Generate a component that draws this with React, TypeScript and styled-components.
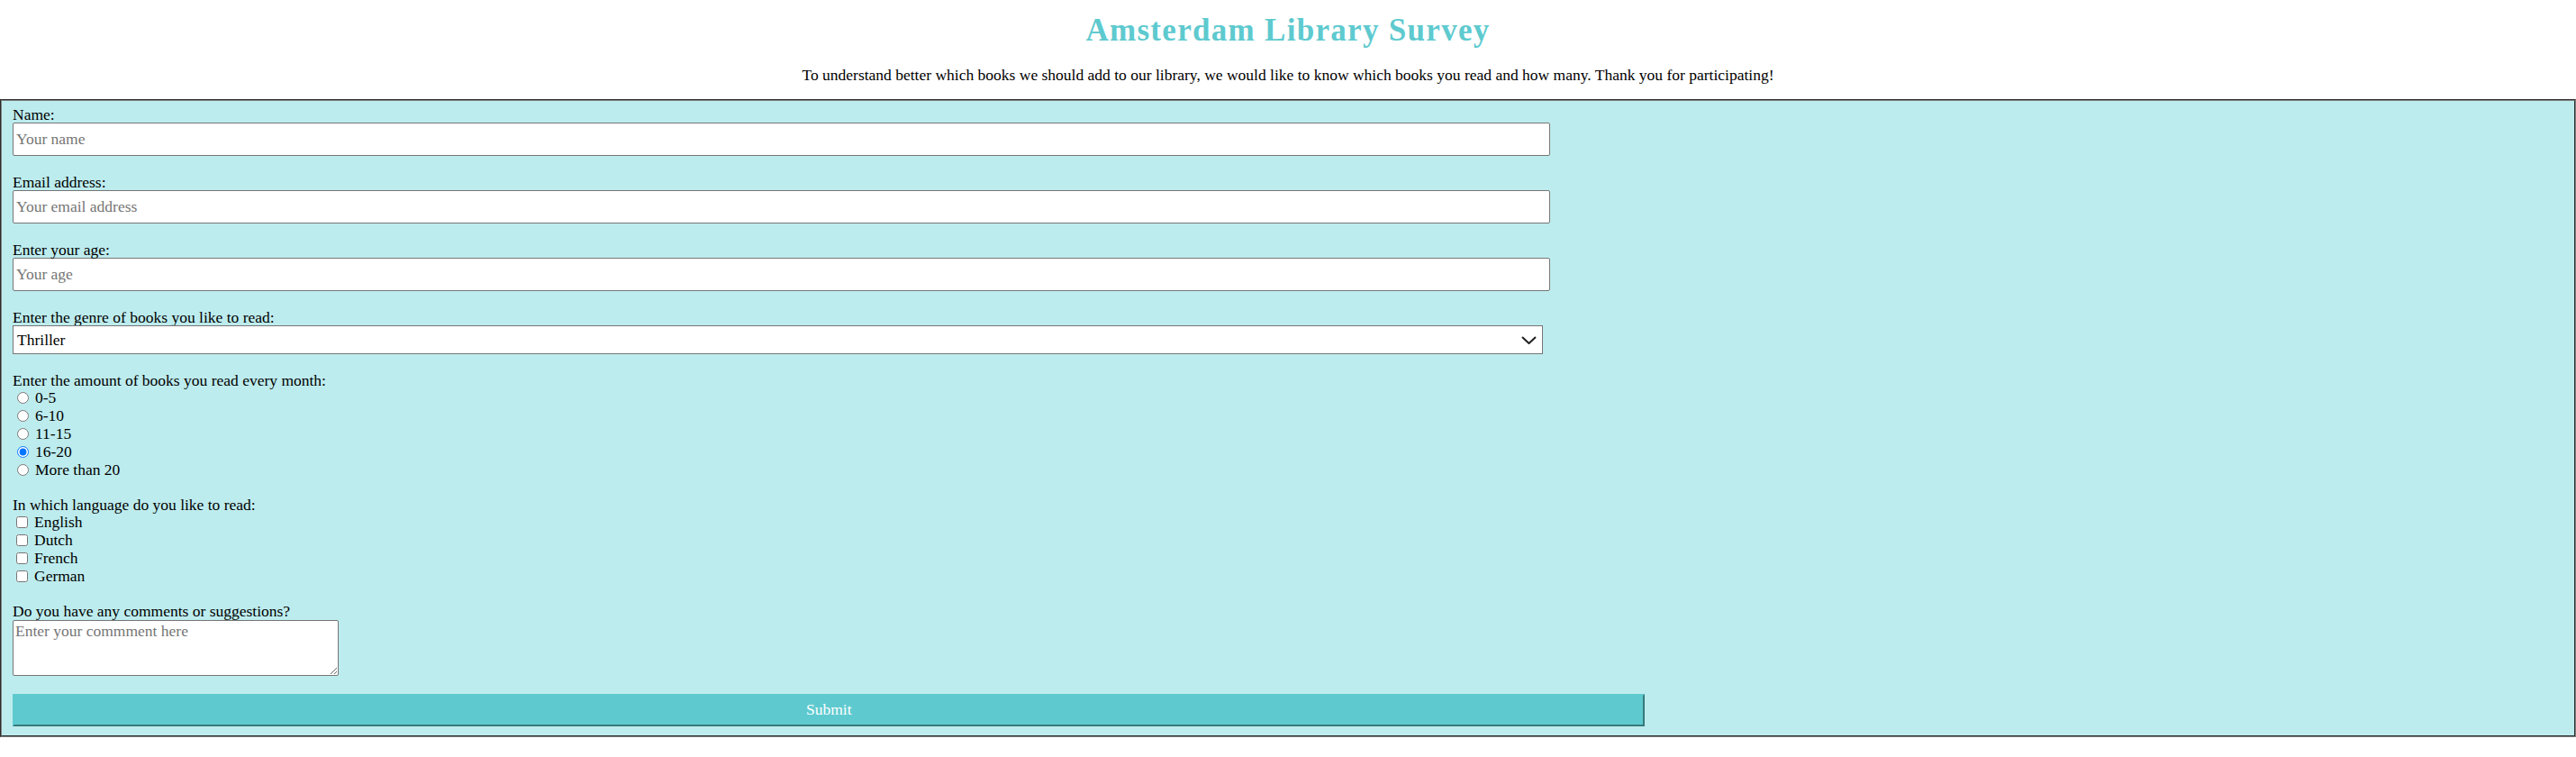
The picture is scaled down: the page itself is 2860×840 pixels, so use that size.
import * as React from 'react';
import styled, { createGlobalStyle } from 'styled-components';

const GlobalStyle = createGlobalStyle`
  body {
    margin: 0;
    background: #ffffff;
    color: #000000;
    font-family: "Liberation Serif", "DejaVu Serif", serif;
    font-size: 17.5px;
  }
`;

const amounts = ['0-5', '6-10', '11-15', '16-20', 'More than 20'];
const languages = ['English', 'Dutch', 'French', 'German'];
const genres = ['Thriller', 'Fantasy', 'Romance', 'Science fiction', 'Biography', 'History'];

function App(): React.ReactElement {
  return (
    <>
      <GlobalStyle />
      <StyledHeader>
        <StyledTitle>Amsterdam Library Survey</StyledTitle>
        <StyledIntro>
          To understand better which books we should add to our library, we would like to know which books you read
          and how many. Thank you for participating!
        </StyledIntro>
      </StyledHeader>
      <form onSubmit={(e) => e.preventDefault()}>
        <StyledFieldset>
          <StyledQuestion>
            <StyledLabel htmlFor="name">Name:</StyledLabel>
            <StyledInput id="name" type="text" placeholder="Your name" />
          </StyledQuestion>
          <StyledQuestion>
            <StyledLabel htmlFor="email">Email address:</StyledLabel>
            <StyledInput id="email" type="email" placeholder="Your email address" />
          </StyledQuestion>
          <StyledQuestion>
            <StyledLabel htmlFor="age">Enter your age:</StyledLabel>
            <StyledInput id="age" type="number" placeholder="Your age" />
          </StyledQuestion>
          <StyledQuestion>
            <StyledLabel htmlFor="genre">Enter the genre of books you like to read:</StyledLabel>
            <StyledSelectWrap>
              <StyledSelect id="genre" defaultValue="Thriller">
                {genres.map((genre) => (
                  <option key={genre}>{genre}</option>
                ))}
              </StyledSelect>
              <StyledChevron viewBox="0 0 17 9" aria-hidden="true">
                <polyline points="1,1 8.5,8 16,1" />
              </StyledChevron>
            </StyledSelectWrap>
          </StyledQuestion>
          <StyledQuestion>
            <StyledLabel as="div">Enter the amount of books you read every month:</StyledLabel>
            {amounts.map((amount) => (
              <StyledOption key={amount}>
                <StyledRadio type="radio" name="amount" value={amount} defaultChecked={amount === '16-20'} />
                {amount}
              </StyledOption>
            ))}
          </StyledQuestion>
          <StyledQuestion>
            <StyledLabel as="div">In which language do you like to read:</StyledLabel>
            {languages.map((language) => (
              <StyledOption key={language}>
                <StyledCheckbox type="checkbox" name="language" value={language} />
                {language}
              </StyledOption>
            ))}
          </StyledQuestion>
          <StyledQuestion>
            <StyledLabel htmlFor="comments">Do you have any comments or suggestions?</StyledLabel>
            <StyledTextarea id="comments" placeholder="Enter your commment here" />
          </StyledQuestion>
          <StyledSubmit type="submit">Submit</StyledSubmit>
        </StyledFieldset>
      </form>
    </>
  );
}

const StyledHeader = styled.header`
  text-align: center;
`;

const StyledTitle = styled.h1`
  margin: 16px 0 22px;
  color: #5ecacf;
  font-size: 35px;
  font-weight: bold;
  letter-spacing: 1.3px;
  line-height: 36px;
`;

const StyledIntro = styled.p`
  margin: 0 0 18px;
  font-size: 17.5px;
  line-height: 18px;
`;

const StyledFieldset = styled.fieldset`
  margin: 0;
  min-width: 0;
  padding: 5.6px 12px 10px;
  border: 2px groove #808080;
  background: #bdecee;
`;

const StyledQuestion = styled.div`
  margin-bottom: 20px;
`;

const StyledLabel = styled.label`
  display: block;
  line-height: 18.2px;
`;

const StyledInput = styled.input`
  display: block;
  box-sizing: border-box;
  width: calc(60% + 8px);
  height: 37px;
  margin: 0;
  padding: 0 3px;
  border: 1px solid #767676;
  border-radius: 2px;
  background: #ffffff;
  font-family: inherit;
  font-size: 17.5px;
  color: #000000;
  -moz-appearance: textfield;

  &::placeholder {
    color: #757575;
  }

  &::-webkit-outer-spin-button,
  &::-webkit-inner-spin-button {
    -webkit-appearance: none;
    margin: 0;
  }
`;

const StyledSelectWrap = styled.div`
  position: relative;
  width: 60%;
`;

const StyledSelect = styled.select`
  display: block;
  box-sizing: border-box;
  width: 100%;
  height: 31.5px;
  margin: 0;
  padding: 0 30px 0 4px;
  border: 1px solid #767676;
  border-radius: 0;
  background: #ffffff;
  font-family: inherit;
  font-size: 17.5px;
  color: #000000;
  appearance: none;
`;

const StyledChevron = styled.svg`
  position: absolute;
  top: 11.5px;
  right: 7px;
  width: 17px;
  height: 9px;
  fill: none;
  stroke: #1f1f1f;
  stroke-width: 2;
  pointer-events: none;
`;

const StyledOption = styled.label`
  display: flex;
  align-items: center;
  height: 20px;
  line-height: 18px;
`;

const StyledRadio = styled.input`
  width: 13px;
  height: 13px;
  margin: 0 7px 0 5px;
`;

const StyledCheckbox = styled.input`
  width: 13px;
  height: 13px;
  margin: 0 7px 0 4px;
`;

const StyledTextarea = styled.textarea`
  display: block;
  box-sizing: border-box;
  width: 362px;
  height: 62px;
  margin: 0;
  padding: 2px;
  border: 1px solid #767676;
  border-radius: 2px;
  background: #ffffff;
  font-family: inherit;
  font-size: 17.5px;
  line-height: 18px;

  &::placeholder {
    color: #757575;
  }
`;

const StyledSubmit = styled.button`
  display: block;
  box-sizing: border-box;
  width: 64%;
  height: 36px;
  margin: 4px 0 0;
  padding: 0;
  border: 2px solid;
  border-color: #5ecacf #38787b #38787b #5ecacf;
  background: #5ecacf;
  color: #ffffff;
  font-family: inherit;
  font-size: 17.5px;
  cursor: pointer;
`;

export default App;
